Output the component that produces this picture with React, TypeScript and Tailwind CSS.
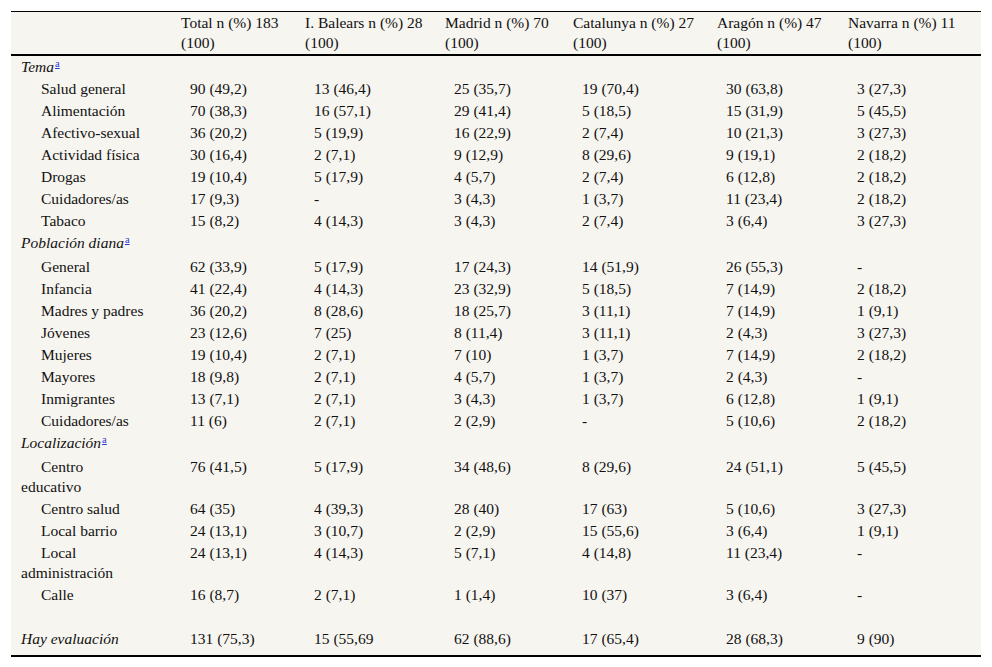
type Row = {
  label: string;
  values: string[];
  kind: 'cat' | 'item' | 'blank' | 'total';
  wrap?: [string, string];
  tall?: boolean;
};

const headers = [
  ['Total n (%) 183', '(100)'],
  ['I. Balears n (%) 28', '(100)'],
  ['Madrid n (%) 70', '(100)'],
  ['Catalunya n (%) 27', '(100)'],
  ['Aragón n (%) 47', '(100)'],
  ['Navarra n (%) 11', '(100)'],
];

const rows: Row[] = [
  { label: 'Tema', values: [], kind: 'cat' },
  { label: 'Salud general', values: ['90 (49,2)', '13 (46,4)', '25 (35,7)', '19 (70,4)', '30 (63,8)', '3 (27,3)'], kind: 'item' },
  { label: 'Alimentación', values: ['70 (38,3)', '16 (57,1)', '29 (41,4)', '5 (18,5)', '15 (31,9)', '5 (45,5)'], kind: 'item' },
  { label: 'Afectivo-sexual', values: ['36 (20,2)', '5 (19,9)', '16 (22,9)', '2 (7,4)', '10 (21,3)', '3 (27,3)'], kind: 'item' },
  { label: 'Actividad física', values: ['30 (16,4)', '2 (7,1)', '9 (12,9)', '8 (29,6)', '9 (19,1)', '2 (18,2)'], kind: 'item' },
  { label: 'Drogas', values: ['19 (10,4)', '5 (17,9)', '4 (5,7)', '2 (7,4)', '6 (12,8)', '2 (18,2)'], kind: 'item' },
  { label: 'Cuidadores/as', values: ['17 (9,3)', '-', '3 (4,3)', '1 (3,7)', '11 (23,4)', '2 (18,2)'], kind: 'item' },
  { label: 'Tabaco', values: ['15 (8,2)', '4 (14,3)', '3 (4,3)', '2 (7,4)', '3 (6,4)', '3 (27,3)'], kind: 'item' },
  { label: 'Población diana', values: [], kind: 'cat', tall: true },
  { label: 'General', values: ['62 (33,9)', '5 (17,9)', '17 (24,3)', '14 (51,9)', '26 (55,3)', '-'], kind: 'item' },
  { label: 'Infancia', values: ['41 (22,4)', '4 (14,3)', '23 (32,9)', '5 (18,5)', '7 (14,9)', '2 (18,2)'], kind: 'item' },
  { label: 'Madres y padres', values: ['36 (20,2)', '8 (28,6)', '18 (25,7)', '3 (11,1)', '7 (14,9)', '1 (9,1)'], kind: 'item' },
  { label: 'Jóvenes', values: ['23 (12,6)', '7 (25)', '8 (11,4)', '3 (11,1)', '2 (4,3)', '3 (27,3)'], kind: 'item' },
  { label: 'Mujeres', values: ['19 (10,4)', '2 (7,1)', '7 (10)', '1 (3,7)', '7 (14,9)', '2 (18,2)'], kind: 'item' },
  { label: 'Mayores', values: ['18 (9,8)', '2 (7,1)', '4 (5,7)', '1 (3,7)', '2 (4,3)', '-'], kind: 'item' },
  { label: 'Inmigrantes', values: ['13 (7,1)', '2 (7,1)', '3 (4,3)', '1 (3,7)', '6 (12,8)', '1 (9,1)'], kind: 'item' },
  { label: 'Cuidadores/as', values: ['11 (6)', '2 (7,1)', '2 (2,9)', '-', '5 (10,6)', '2 (18,2)'], kind: 'item' },
  { label: 'Localización', values: [], kind: 'cat', tall: true },
  { label: 'Centro educativo', wrap: ['Centro', 'educativo'], values: ['76 (41,5)', '5 (17,9)', '34 (48,6)', '8 (29,6)', '24 (51,1)', '5 (45,5)'], kind: 'item' },
  { label: 'Centro salud', values: ['64 (35)', '4 (39,3)', '28 (40)', '17 (63)', '5 (10,6)', '3 (27,3)'], kind: 'item' },
  { label: 'Local barrio', values: ['24 (13,1)', '3 (10,7)', '2 (2,9)', '15 (55,6)', '3 (6,4)', '1 (9,1)'], kind: 'item' },
  { label: 'Local administración', wrap: ['Local', 'administración'], values: ['24 (13,1)', '4 (14,3)', '5 (7,1)', '4 (14,8)', '11 (23,4)', '-'], kind: 'item' },
  { label: 'Calle', values: ['16 (8,7)', '2 (7,1)', '1 (1,4)', '10 (37)', '3 (6,4)', '-'], kind: 'item' },
  { label: '', values: [], kind: 'blank' },
  { label: 'Hay evaluación', values: ['131 (75,3)', '15 (55,69', '62 (88,6)', '17 (65,4)', '28 (68,3)', '9 (90)'], kind: 'total' },
];

// footnote marker, preflight already makes sup relative
const Sup = () => (
  <sup className="text-[10.5px] text-[#2b3ad8] underline not-italic align-baseline top-[-5px] ml-px">a</sup>
);

export default function App() {
  return (
    <div className="bg-white min-h-[667px] pt-[11px] pl-[11px] font-['Liberation_Serif','Times_New_Roman',serif] text-[15.5px] leading-[20px] text-[#111]">
      <table className="w-[970px] table-fixed border-collapse bg-[#f7f5f0]">
        <colgroup>
          <col className="w-[160px]" />
          <col className="w-[124px]" />
          <col className="w-[140px]" />
          <col className="w-[128px]" />
          <col className="w-[144px]" />
          <col className="w-[131px]" />
          <col className="w-[143px]" />
        </colgroup>
        <thead>
          <tr className="border-t border-t-black border-b-2 border-b-black">
            <th className="px-[10px] py-px" />
            {headers.map(([a, b]) => (
              <th key={a} className="px-[10px] py-px text-left font-normal align-top whitespace-nowrap">
                {a}
                <br />
                {b}
              </th>
            ))}
          </tr>
        </thead>
        <tbody>
          {rows.map((r, i) => {
            const last = i === rows.length - 1;
            const pb = last ? 'pb-[6px]' : r.tall ? 'pb-[3px]' : 'pb-px';
            return (
              <tr key={i} className={last ? 'border-b-2 border-b-black' : ''}>
                <td className={`pl-[10px] pr-1 pt-px align-top ${pb}`}>
                  {r.kind === 'cat' && (
                    <span className="italic">
                      {r.label}
                      <Sup />
                    </span>
                  )}
                  {r.kind === 'item' &&
                    (r.wrap ? (
                      <div className="indent-5">
                        {r.wrap[0]}
                        <br />
                        {r.wrap[1]}
                      </div>
                    ) : (
                      <div className="indent-5 whitespace-nowrap">{r.label}</div>
                    ))}
                  {r.kind === 'blank' && <span>&nbsp;</span>}
                  {r.kind === 'total' && <span className="italic">{r.label}</span>}
                </td>
                {[0, 1, 2, 3, 4, 5].map(j => (
                  <td key={j} className={`pl-[19px] pr-1 pt-px align-top whitespace-nowrap ${pb}`}>
                    {r.values[j] ?? ''}
                  </td>
                ))}
              </tr>
            );
          })}
        </tbody>
      </table>
    </div>
  );
}
